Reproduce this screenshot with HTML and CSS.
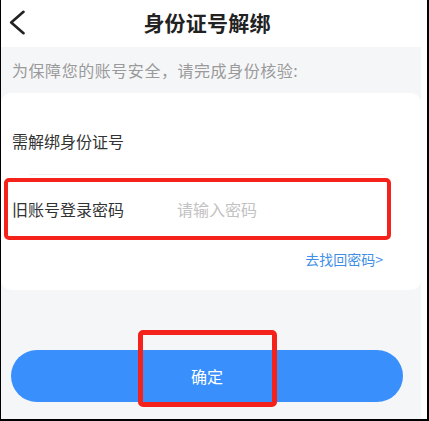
FILE: index.html
```html
<!DOCTYPE html>
<html lang="zh-CN">
<head>
<meta charset="utf-8">
<title>身份证号解绑</title>
<link rel="stylesheet" href="styles.css">
</head>
<body>
<div class="device">
  <header class="header">
    <span class="back">
      <svg width="16" height="25" viewBox="0 0 16 25"><polyline points="14.5,1.8 2.2,12.5 14.5,23.2" fill="none" stroke="#222" stroke-width="2.6" stroke-linecap="round" stroke-linejoin="round"/></svg>
    </span>
    <h1 class="title">身份证号解绑</h1>
    <span></span>
  </header>
  <main class="content">
    <div class="notice">为保障您的账号安全，请完成身份核验:</div>
    <section class="card">
      <div class="row row-first">需解绑身份证号</div>
      <div class="divider"></div>
      <div class="row row-second">
        <span class="label">旧账号登录密码</span>
        <span class="placeholder">请输入密码</span>
      </div>
      <div class="link">去找回密码&gt;</div>
    </section>
    <button class="confirm">确定</button>
  </main>
  <div class="mark mark-field"></div>
  <div class="mark mark-button"></div>
</div>
</body>
</html>
```
FILE: styles.css
```css
html, body {
  margin: 0;
  padding: 0;
  background: #fff;
}
body {
  font-family: "Noto Sans CJK SC", "Noto Sans", sans-serif;
}
.device {
  position: relative;
  box-sizing: border-box;
  width: 429px;
  height: 421px;
  border-left: 1px solid #000;
  border-right: 2px solid #000;
  border-bottom: 2px solid #000;
  background: #fff;
  display: flex;
  flex-direction: column;
  overflow: hidden;
}
.header {
  height: 47px;
  flex: none;
  display: grid;
  grid-template-columns: 1fr auto 1fr;
  align-items: center;
  padding: 0 22px 3px 8px;
  box-sizing: border-box;
}
.back {
  display: flex;
  align-items: center;
  justify-self: start;
}
.back svg { display: block; }
.title {
  margin: 0;
  font-size: 21px;
  font-weight: 700;
  color: #222;
  line-height: 28px;
  letter-spacing: 0.2px;
}
.content {
  flex: 1;
  margin-right: 6px;
  background: #f5f6f8;
  display: flex;
  flex-direction: column;
}
.notice {
  height: 46px;
  display: flex;
  align-items: center;
  padding-left: 11px;
  font-size: 16px;
  letter-spacing: 0.55px;
  color: #9a9a9a;
}
.card {
  background: #fff;
  border-radius: 10px;
  height: 197px;
  box-sizing: border-box;
  padding: 37px 38px 0 11px;
  display: flex;
  flex-direction: column;
}
.row {
  font-size: 16px;
  line-height: 22px;
  color: #333;
  display: flex;
}
.row-first { margin-bottom: 22px; }
.divider {
  height: 1px;
  background: #efefef;
  margin: 0 -2px 0 18px;
}
.row-second { margin-top: 23px; }
.label { width: 165px; flex: none; }
.placeholder { color: #c2c2c2; }
.link {
  margin-top: 29px;
  text-align: right;
  font-size: 14px;
  line-height: 20px;
  color: #3f8fe6;
}
.confirm {
  margin: 60px 0 0 10px;
  width: 392px;
  height: 52px;
  border: none;
  border-radius: 26px;
  background: #3990fc;
  color: #fff;
  font-family: "Noto Sans CJK SC", "Noto Sans", sans-serif;
  font-size: 16px;
  padding: 0;
}
.mark {
  position: absolute;
  box-sizing: border-box;
  border: 4px solid #f5221b;
  border-radius: 5px;
}
.mark-field {
  left: 3px;
  top: 178px;
  width: 387px;
  height: 62px;
}
.mark-button {
  left: 137px;
  top: 330px;
  width: 139px;
  height: 77px;
  border-width: 5px;
}
```
